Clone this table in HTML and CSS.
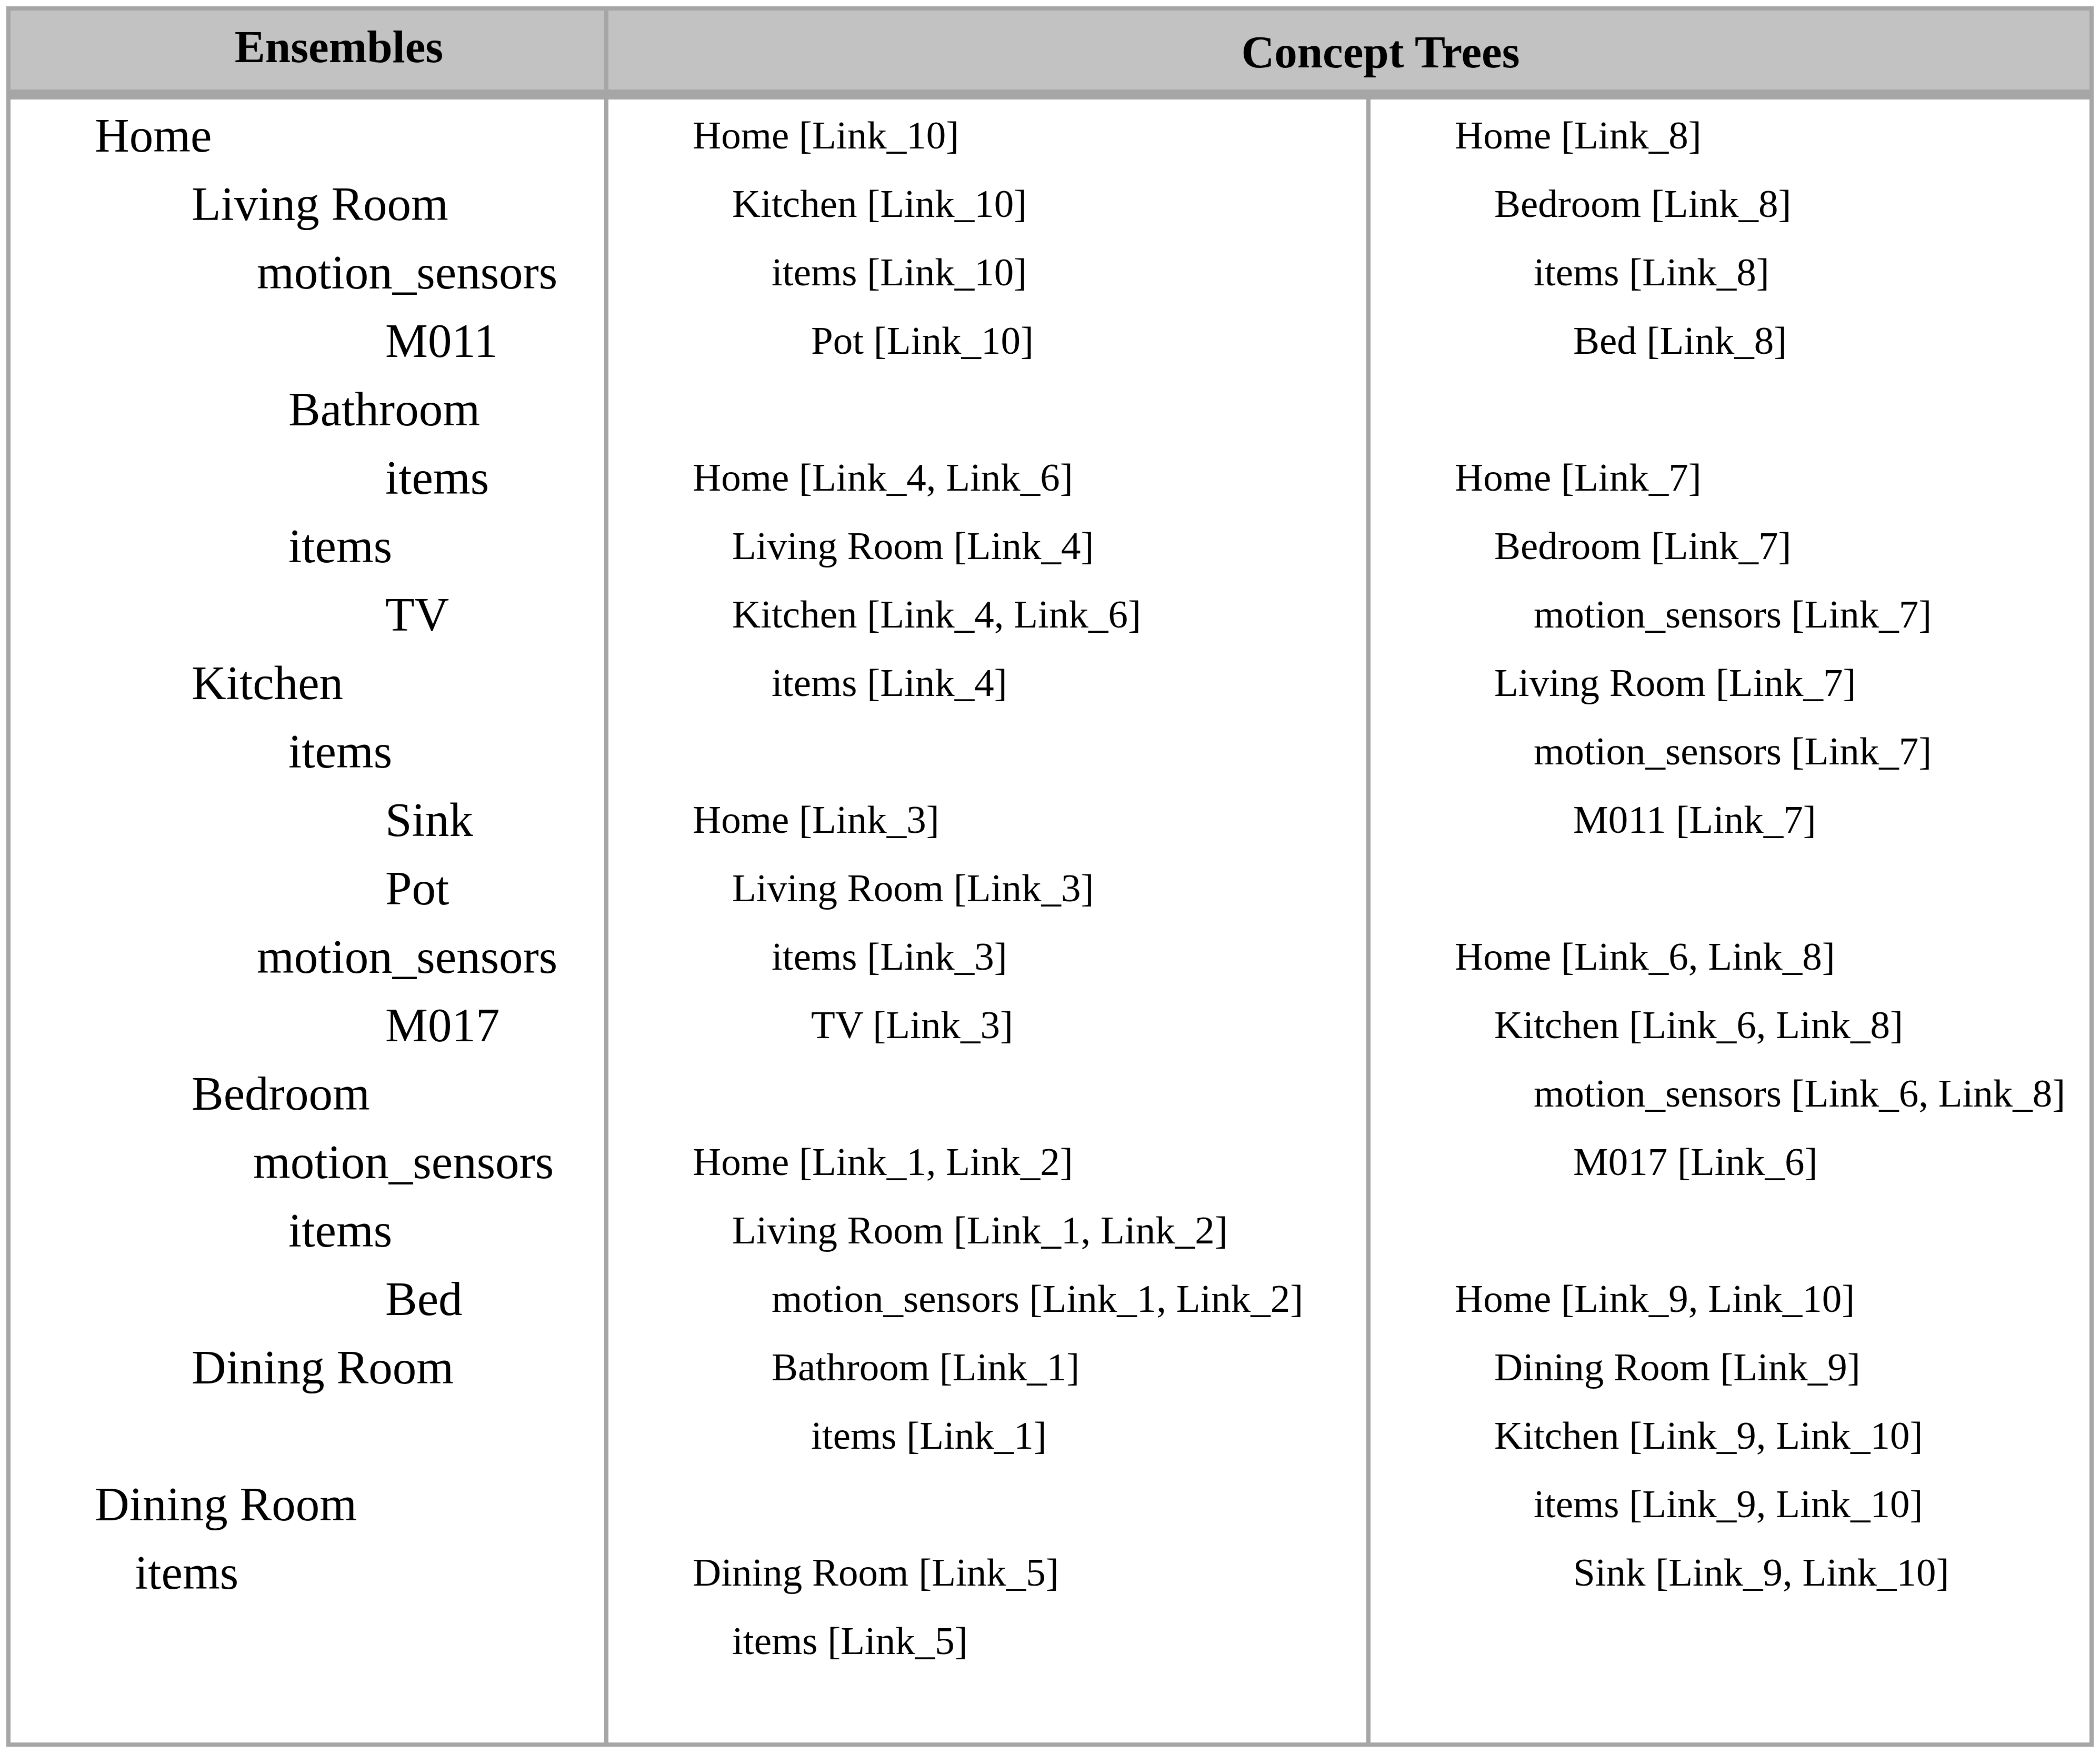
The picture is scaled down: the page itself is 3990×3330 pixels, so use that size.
FILE: index.html
```html
<!DOCTYPE html>
<html lang="en">
<head>
<meta charset="utf-8">
<title>Ensembles and Concept Trees</title>
<link rel="stylesheet" href="styles.css">
</head>
<body>
<div class="table">
  <div class="head">
    <div class="hcell hcell-ens">Ensembles</div>
    <div class="hcell hcell-ct">Concept Trees</div>
  </div>
  <div class="tbody">
    <div class="col col-ens">
      <div class="row e0">Home</div>
      <div class="row e1">Living Room</div>
      <div class="row em">motion_sensors</div>
      <div class="row e3">M011</div>
      <div class="row e2">Bathroom</div>
      <div class="row e3">items</div>
      <div class="row e2">items</div>
      <div class="row e3">TV</div>
      <div class="row e1">Kitchen</div>
      <div class="row e2">items</div>
      <div class="row e3">Sink</div>
      <div class="row e3">Pot</div>
      <div class="row em">motion_sensors</div>
      <div class="row e3">M017</div>
      <div class="row e1">Bedroom</div>
      <div class="row em2">motion_sensors</div>
      <div class="row e2">items</div>
      <div class="row e3">Bed</div>
      <div class="row e1">Dining Room</div>
      <div class="row"></div>
      <div class="row e0">Dining Room</div>
      <div class="row eh">items</div>
    </div>
    <div class="col col-tree">
      <div class="row t0">Home [Link_10]</div>
      <div class="row t1">Kitchen [Link_10]</div>
      <div class="row t2">items [Link_10]</div>
      <div class="row t3">Pot [Link_10]</div>
      <div class="row"></div>
      <div class="row t0">Home [Link_4, Link_6]</div>
      <div class="row t1">Living Room [Link_4]</div>
      <div class="row t1">Kitchen [Link_4, Link_6]</div>
      <div class="row t2">items [Link_4]</div>
      <div class="row"></div>
      <div class="row t0">Home [Link_3]</div>
      <div class="row t1">Living Room [Link_3]</div>
      <div class="row t2">items [Link_3]</div>
      <div class="row t3">TV [Link_3]</div>
      <div class="row"></div>
      <div class="row t0">Home [Link_1, Link_2]</div>
      <div class="row t1">Living Room [Link_1, Link_2]</div>
      <div class="row t2">motion_sensors [Link_1, Link_2]</div>
      <div class="row t2">Bathroom [Link_1]</div>
      <div class="row t3">items [Link_1]</div>
      <div class="row"></div>
      <div class="row t0">Dining Room [Link_5]</div>
      <div class="row t1">items [Link_5]</div>
    </div>
    <div class="col col-tree">
      <div class="row t0">Home [Link_8]</div>
      <div class="row t1">Bedroom [Link_8]</div>
      <div class="row t2">items [Link_8]</div>
      <div class="row t3">Bed [Link_8]</div>
      <div class="row"></div>
      <div class="row t0">Home [Link_7]</div>
      <div class="row t1">Bedroom [Link_7]</div>
      <div class="row t2">motion_sensors [Link_7]</div>
      <div class="row t1">Living Room [Link_7]</div>
      <div class="row t2">motion_sensors [Link_7]</div>
      <div class="row t3">M011 [Link_7]</div>
      <div class="row"></div>
      <div class="row t0">Home [Link_6, Link_8]</div>
      <div class="row t1">Kitchen [Link_6, Link_8]</div>
      <div class="row t2">motion_sensors [Link_6, Link_8]</div>
      <div class="row t3">M017 [Link_6]</div>
      <div class="row"></div>
      <div class="row t0">Home [Link_9, Link_10]</div>
      <div class="row t1">Dining Room [Link_9]</div>
      <div class="row t1">Kitchen [Link_9, Link_10]</div>
      <div class="row t2">items [Link_9, Link_10]</div>
      <div class="row t3">Sink [Link_9, Link_10]</div>
    </div>
  </div>
</div>
</body>
</html>
```
FILE: styles.css
```css
html, body {
  margin: 0;
  padding: 0;
  background: #ffffff;
}

body {
  font-family: "Liberation Serif", "Times New Roman", serif;
  color: #000000;
}

.table {
  box-sizing: border-box;
  margin: 12px 0 0 12px;
  width: 3966px;
  height: 3306px;
  border: 8px solid #a6a6a6;
  display: flex;
  flex-direction: column;
  background: #ffffff;
}

.head {
  display: flex;
  height: 169px;
  box-sizing: border-box;
  border-bottom: 19px solid #a6a6a6;
  background: #c2c2c2;
}

.hcell {
  box-sizing: border-box;
  height: 150px;
  padding-left: 120px;
  font-weight: bold;
  font-size: 87px;
  line-height: 100px;
  text-align: center;
  white-space: nowrap;
}

.hcell-ens {
  width: 1136px;
  border-right: 8px solid #a6a6a6;
  padding-top: 19px;
}

.hcell-ct {
  flex: 1;
  padding-top: 29px;
}

.tbody {
  flex: 1;
  display: grid;
  grid-template-columns: 1128px 1448px 1374px;
}

.col {
  box-sizing: border-box;
  padding-left: 160px;
  white-space: nowrap;
}

.col-ens {
  font-size: 91px;
  padding-top: 4px;
}

.col-tree {
  font-size: 75px;
  padding-top: 3px;
  border-left: 8px solid #a6a6a6;
}

.row {
  height: 130px;
  line-height: 130px;
}

/* Ensembles indentation */
.e0 { padding-left: 0; }
.eh { padding-left: 76px; }
.e1 { padding-left: 184px; }
.em { padding-left: 308px; }
.em2 { padding-left: 301px; }
.e2 { padding-left: 368px; }
.e3 { padding-left: 552px; }

/* Concept tree indentation */
.t0 { padding-left: 0; }
.t1 { padding-left: 75px; }
.t2 { padding-left: 150px; }
.t3 { padding-left: 225px; }
```
